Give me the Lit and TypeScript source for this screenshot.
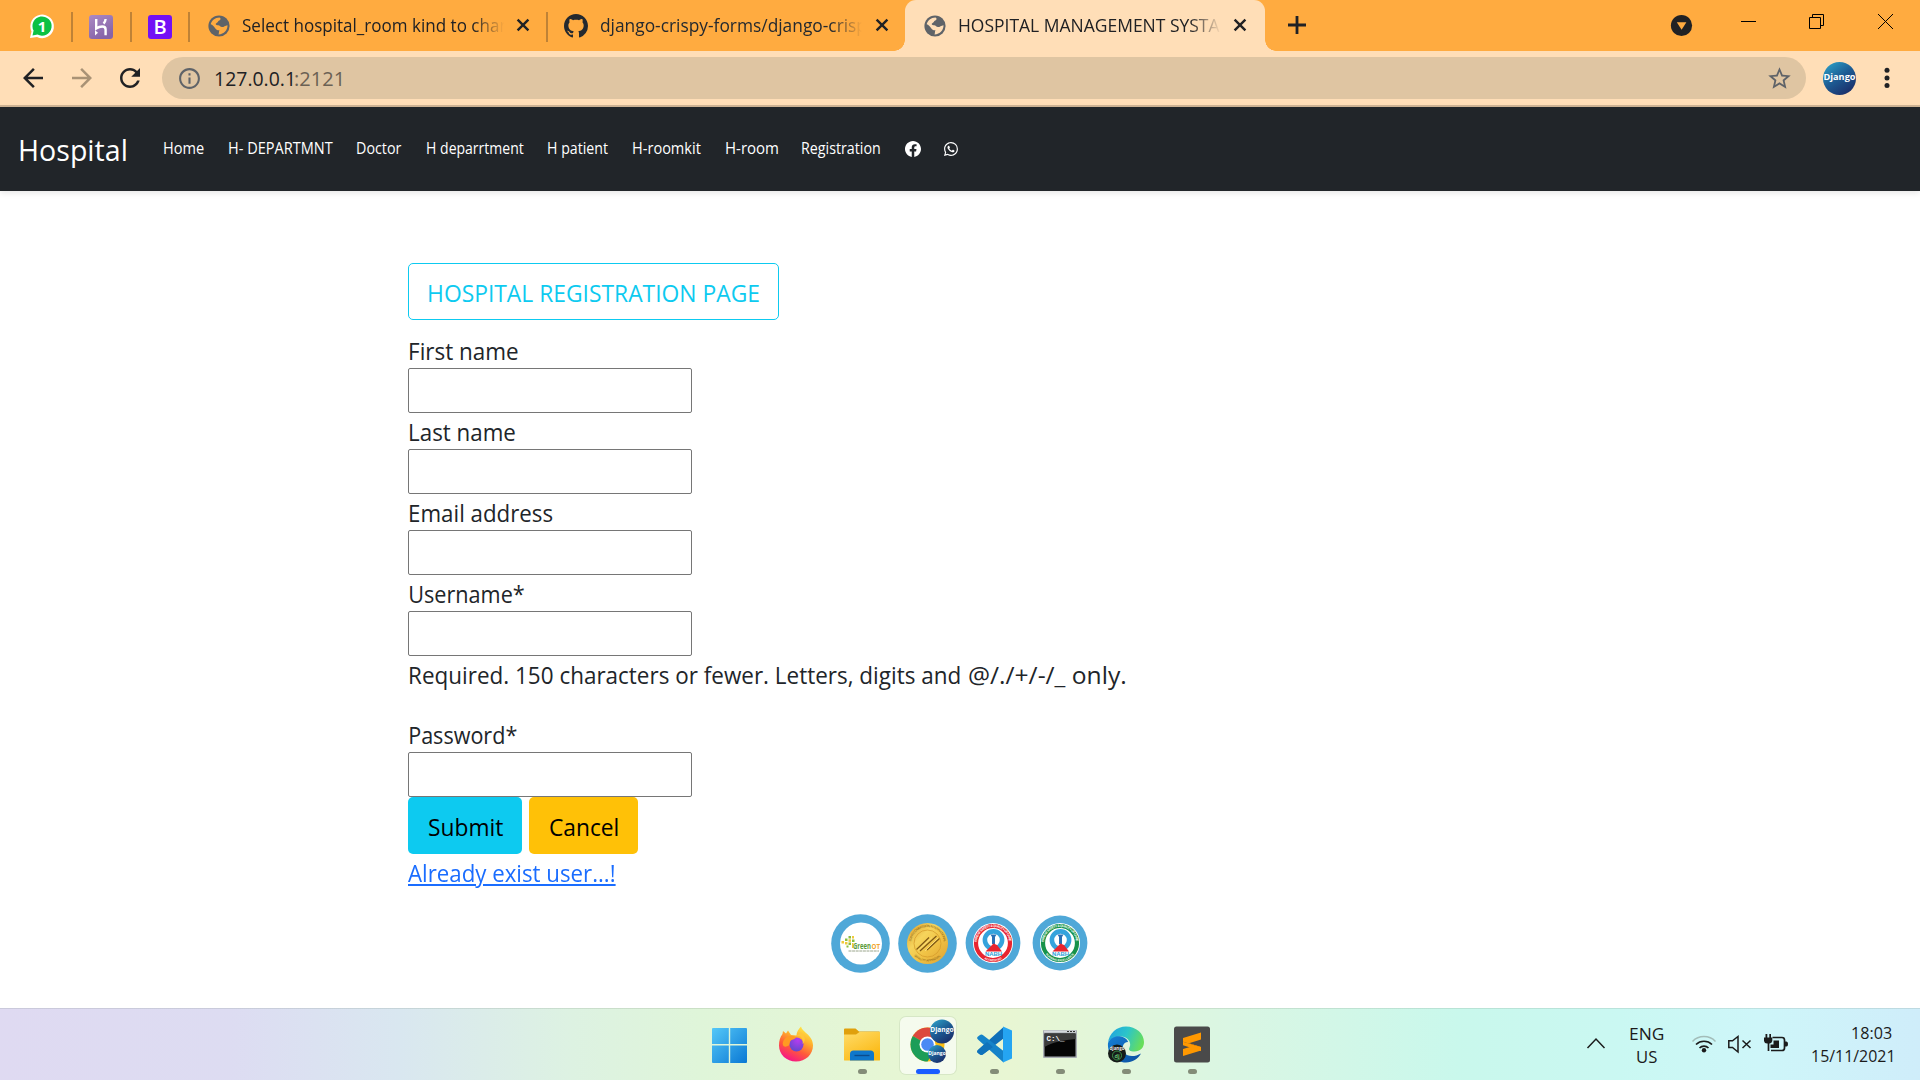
import { LitElement, html, css, svg } from "lit";
import { customElement, property } from "lit/decorators.js";

/** A line of text whose inked width is exactly `w` pixels. */
@customElement("fit-text")
class FitText extends LitElement {
  @property({ type: Number }) w = 0;
  @property() text = "";
  static styles = css`
    :host { display: block; flex: none; white-space: pre; }
    .ink { display: inline-block; transform-origin: 0 0; text-decoration: var(--deco, none);
      text-decoration-thickness: 2px; text-underline-offset: 2px; }
  `;
  render() { return html`<span class="ink">${this.text}</span>`; }
  updated() {
    const cs = getComputedStyle(this);
    const ctx = document.createElement("canvas").getContext("2d")!;
    ctx.font = `${cs.fontWeight} ${cs.fontSize} ${cs.fontFamily}`;
    const m = ctx.measureText(this.text);
    const s = this.w / (m.actualBoundingBoxLeft + m.actualBoundingBoxRight);
    const ink = this.renderRoot.querySelector(".ink") as HTMLElement;
    ink.style.transform = `translateX(${m.actualBoundingBoxLeft * s}px) scaleX(${s})`;
    this.style.width = `${this.w}px`;
  }
}

const I = {
  back: "M20 11H7.83l5.59-5.59L12 4l-8 8 8 8 1.41-1.41L7.83 13H20v-2z",
  fwd: "M12 4l-1.41 1.41L16.17 11H4v2h12.17l-5.58 5.59L12 20l8-8z",
  reload: "M17.65 6.35C16.2 4.9 14.21 4 12 4c-4.42 0-7.99 3.58-7.99 8s3.57 8 7.99 8c3.73 0 6.84-2.55 7.73-6h-2.08c-.82 2.33-3.04 4-5.65 4-3.31 0-6-2.69-6-6s2.69-6 6-6c1.66 0 3.14.69 4.22 1.78L13 11h7V4l-2.35 2.35z",
  star: "M22 9.24l-7.19-.62L12 2 9.19 8.63 2 9.24l5.46 4.73L5.82 21 12 17.27 18.18 21l-1.63-7.03L22 9.24zM12 15.4l-3.76 2.27 1-4.28-3.32-2.88 4.38-.38L12 6.1l1.71 4.04 4.38.38-3.32 2.88 1 4.28L12 15.4z",
  info: "M11 7h2v2h-2zm0 4h2v6h-2zm1-9C6.48 2 2 6.48 2 12s4.48 10 10 10 10-4.48 10-10S17.52 2 12 2zm0 18c-4.41 0-8-3.59-8-8s3.59-8 8-8 8 3.59 8 8-3.59 8-8 8z",
  github: "M8 0C3.58 0 0 3.58 0 8c0 3.54 2.29 6.53 5.47 7.59.4.07.55-.17.55-.38 0-.19-.01-.82-.01-1.49-2.01.37-2.53-.49-2.69-.94-.09-.23-.48-.94-.82-1.13-.28-.15-.68-.52-.01-.53.63-.01 1.08.58 1.23.82.72 1.21 1.87.87 2.33.66.07-.52.28-.87.51-1.07-1.78-.2-3.64-.89-3.64-3.95 0-.87.31-1.59.82-2.15-.08-.2-.36-1.02.08-2.12 0 0 .67-.21 2.2.82.64-.18 1.32-.27 2-.27.68 0 1.36.09 2 .27 1.53-1.04 2.2-.82 2.2-.82.44 1.1.16 1.92.08 2.12.51.56.82 1.27.82 2.15 0 3.07-1.87 3.75-3.65 3.95.29.25.54.73.54 1.48 0 1.07-.01 1.93-.01 2.2 0 .21.15.46.55.38A8.013 8.013 0 0016 8c0-4.42-3.58-8-8-8z",
  facebook: "M16 8.049c0-4.446-3.582-8.05-8-8.05C3.58 0-.002 3.603-.002 8.05c0 4.017 2.926 7.347 6.75 7.951v-5.625h-2.03V8.05H6.75V6.275c0-2.017 1.195-3.131 3.022-3.131.876 0 1.791.157 1.791.157v1.98h-1.009c-.993 0-1.303.621-1.303 1.258v1.51h2.218l-.354 2.326H9.25V16c3.824-.604 6.75-3.934 6.75-7.951z",
  whatsapp: "M13.601 2.326A7.854 7.854 0 0 0 7.994 0C3.627 0 .068 3.558.064 7.926c0 1.399.366 2.76 1.057 3.965L0 16l4.204-1.102a7.933 7.933 0 0 0 3.79.965h.004c4.368 0 7.926-3.558 7.93-7.93A7.898 7.898 0 0 0 13.6 2.326zM7.994 14.521a6.573 6.573 0 0 1-3.356-.92l-.24-.144-2.494.654.666-2.433-.156-.251a6.56 6.56 0 0 1-1.007-3.505c0-3.626 2.957-6.584 6.591-6.584a6.56 6.56 0 0 1 4.66 1.931 6.557 6.557 0 0 1 1.928 4.66c-.004 3.639-2.961 6.592-6.592 6.592zm3.615-4.934c-.197-.099-1.17-.578-1.353-.646-.182-.065-.315-.099-.445.099-.133.197-.513.646-.627.775-.114.133-.232.148-.43.05-.197-.1-.836-.308-1.592-.985-.59-.525-.985-1.175-1.103-1.372-.114-.198-.011-.304.088-.403.087-.088.197-.232.296-.346.1-.114.133-.198.198-.33.065-.134.034-.248-.015-.347-.05-.099-.445-1.076-.612-1.47-.16-.389-.323-.335-.445-.34-.114-.007-.247-.007-.38-.007a.729.729 0 0 0-.529.247c-.182.198-.691.677-.691 1.654 0 .977.71 1.916.81 2.049.098.133 1.394 2.132 3.383 2.992.47.205.84.326 1.129.418.475.152.904.129 1.246.08.38-.058 1.171-.48 1.338-.943.164-.464.164-.86.114-.943-.049-.084-.182-.133-.38-.232z",
};

const icon = (d: string, size: number, box = 24) =>
  html`<svg width=${size} height=${size} viewBox="0 0 ${box} ${box}" fill="currentColor"><path d=${d}></path></svg>`;

const globe = html`<svg class="globe" width="22" height="22" viewBox="0 0 22 22">
  <circle cx="11" cy="11" r="10.6" fill="#5f6368"/>
  <path class="land" d="M2.700 9.300C3.500 5.500 7 2.700 11.500 2.500C13.200 3.200 12.700 4.900 11.200 5.600C9.800 6.200 9.900 7.800 8.300 8.200C7 8.700 8 10.300 9.800 10.200C12 10 12.200 12.100 14 12.100C16 12.100 17 10.600 19.500 10.200C19.700 14.800 16 19.200 10.500 19.500C11.300 17.800 10.600 16.700 11.500 15.300C9.500 15.500 8 14.500 7 12.900C5.800 11.200 4.500 10 2.700 9.300Z"/>
</svg>`;

const tabX = html`<svg class="tabx" width="14" height="14" viewBox="0 0 14 14"><path d="M1.600 1.600L12.400 12.400M12.400 1.600L1.600 12.400" stroke="#202124" stroke-width="2.400"/></svg>`;

const django = (cx: number, cy: number, r: number, fs: number) => svg`
  <circle cx=${cx} cy=${cy} r=${r} fill="url(#dj)"/>
  <text x=${cx} y=${cy + fs * 0.12} text-anchor="middle" font-family="Open Sans, sans-serif" font-weight="700" font-size=${fs} textLength=${r * 1.94} lengthAdjust="spacingAndGlyphs" fill="#fff">Django</text>`;
const djGrad = svg`<linearGradient id="dj" x1="0.100" y1="0" x2="0.800" y2="1"><stop offset="0" stop-color="#2da3c9"/><stop offset=".5" stop-color="#1d5b93"/><stop offset="1" stop-color="#1b2a66"/></linearGradient>`;

const nabh = (c: string, top: string, bottom: string, id: string) => html`
  <svg width="56" height="56" viewBox="0 0 56 56">
    <defs><path id="${id}t" d="M11.800 28A16.200 16.200 0 0 1 44.200 28"/><path id="${id}b" d="M9.800 28A18.200 18.200 0 0 0 46.200 28"/></defs>
    <circle cx="28" cy="28" r="27.400" fill="#4fa8d8"/><circle cx="28" cy="28" r="20" fill="#fff"/>
    <circle cx="28" cy="28" r="17" fill="none" stroke=${c} stroke-width="4.200"/>
    <text font-size="3.300" fill="#fff" font-weight="700" font-family="Liberation Sans, sans-serif"><textPath href="#${id}t" textLength="48" startOffset="1">${top}</textPath></text>
    <text font-size="2.800" fill="#fff" font-weight="700" font-family="Liberation Sans, sans-serif"><textPath href="#${id}b" startOffset="50%" text-anchor="middle">${bottom}</textPath></text>
    <circle cx="28.500" cy="25" r="8.600" fill="none" stroke="#35a3dc" stroke-width="4.600"/>
    <path d="M25.500 19.500h6l-1.500 2.500v7h-3v-7z" fill="#2a6fb4"/>
    <path d="M20.500 36.500L28.500 28.500L32 30L37 36.500Z" fill="#e8242f"/>
    <text x="28.500" y="41.400" text-anchor="middle" font-size="6" textLength="17" fill="#2e9fd8" font-weight="700" font-family="Liberation Sans, sans-serif">NABH</text>
  </svg>`;

@customElement("app-root")
class AppRoot extends LitElement {
  static styles = css`
    :host { display: flex; flex-direction: column; width: 1920px; height: 1080px; overflow: hidden; background: #fff;
      font-family: "Open Sans", "Noto Sans", sans-serif; color: #212529; }
    * { box-sizing: border-box; }
    svg { display: block; flex: none; overflow: visible; }
    .strip { height: 51px; flex: none; background: #ffab40; display: flex; align-items: center; font-size: 17.3px; line-height: 51px; color: #202124; padding-left: 29px; }
    .sep { width: 2px; height: 30px; background: #bf8236; flex: none; margin-top: 2px; }
    .fav { margin: 2px 16.250px 0; }
    .tabx { margin-top: -1px; }
    .title { width: 262px; height: 51px; overflow: hidden; flex: none; -webkit-mask-image: linear-gradient(90deg, #000 88%, transparent 100%); mask-image: linear-gradient(90deg, #000 88%, transparent 100%); }
    .tab { display: flex; align-items: center; flex: none; }
    .first { margin-left: 18px; }
    .first .title { margin: 0 12px; }
    .second { margin-left: 15.500px; color: #24292f; }
    .second .title { margin: 0 12.500px; }
    .globe { margin-top: 1px; }
    .globe .land { fill: #ffab40; }
    .active .globe .land { fill: #ffdeb7; }
    .active { width: 360px; height: 51px; background: #ffdeb7; border-radius: 11px 11px 0 0; padding-left: 19px; margin-left: 16px; position: relative; }
    .active .title { margin: 0 12.500px 0 13px; }
    .active::before, .active::after { content: ""; position: absolute; bottom: 0; width: 11px; height: 11px; }
    .active::before { left: -11px; background: radial-gradient(circle at 0 0, transparent 10.500px, #ffdeb7 11px); }
    .active::after { right: -11px; background: radial-gradient(circle at 100% 0, transparent 10.500px, #ffdeb7 11px); }
    .plus { margin: -1px 0 0 23px; }
    .grow { flex: 1; }
    .win { display: flex; align-items: flex-start; height: 51px; padding-right: 27px; }
    .bar { height: 56px; flex: none; background: #ffdeb7; border-bottom: 2px solid #d0b595; display: flex; align-items: center; color: #202124; padding-left: 18px; }
    .fwd { color: #a99275; margin-left: 18.500px; }
    .reload { margin-left: 18px; }
    .omni { margin-left: 17.500px; width: 1644px; height: 42px; border-radius: 21px; background: #dfc5a2; display: flex; align-items: center; padding: 0 13px 0 15px; color: #5f6368; font-size: 20.500px; line-height: 42px; }
    .url { margin-left: 12.500px; display: flex; gap: 3px; }
    .host { color: #202124; }
    .port { color: #6b6154; }
    .avatar { margin-left: 17px; }
    .menu { margin-left: 28px; }
    .nav { height: 84px; flex: none; background: #212529; color: #fff; display: flex; padding-left: 19.500px; box-shadow: 0 2px 6px rgba(0,0,0,.1); }
    .brand { font-size: 29.300px; line-height: 86.500px; margin-right: 38.500px; }
    .links { display: flex; gap: 24.500px; font-size: 15.400px; line-height: 84px; align-items: center; }
    .links > :first-child { margin-right: 1px; }
    .links > svg:last-child { margin-left: -2px; }
    .main { flex: 1; padding: 72px 0 0 408px; font-size: 23.300px; display: flex; flex-direction: column; align-items: flex-start; }
    .head { height: 57px; width: 371px; border: 1px solid #0dcaf0; border-radius: 5px; color: #0dcaf0; line-height: 58px; padding-left: 19.500px; margin-bottom: 12px; }
    .label { height: 36px; line-height: 38px; padding-left: 1.700px; }
    .input { width: 284px; height: 45px; border: 1px solid #767676; border-radius: 2px; background: #fff; }
    .help { margin-bottom: 24px; display: flex; gap: 9.500px; }
    .btns { display: flex; gap: 7px; color: #000; line-height: 60.500px; }
    .btn { height: 57px; border-radius: 5px; padding-left: 20.500px; }
    .submit { width: 114px; background: #0dcaf0; }
    .cancel { width: 109px; background: #ffc107; }
    .link { color: #1a6dff; --deco: underline; padding-left: 0; }
    .badges { display: flex; align-items: center; margin: 23.500px 0 0 422.700px; gap: 8px; }
    .badges > svg:nth-child(4) { margin-left: 3.500px; }
    .task { height: 72px; flex: none; display: flex; border-top: 1px solid rgba(90,110,90,.15);
      background: linear-gradient(90deg, #dfdaf2 0, #dddcf2 230px, #d9e7f0 400px, #ddf2e2 570px, #dff5d9 700px, #e6f6d4 900px, #e8f6d3 1010px, #daf6e3 1230px, #c9f8ec 1460px, #caf8f2 1620px, #cef6f9 1760px, #cfedfa 1920px); color: #1b1b1b; font-size: 17px; }
    .apps { display: flex; margin-left: 696.500px; }
    .app { width: 66px; height: 71px; display: flex; flex-direction: column; align-items: center; padding-top: 8px; }
    .cell { width: 56px; height: 57px; border-radius: 6px; display: flex; flex-direction: column; align-items: center; padding-top: 7px; }
    .on { background: rgba(255,255,255,.6); box-shadow: 0 0 0 1px rgba(120,140,110,.14); }
    .dot { width: 9px; height: 5px; border-radius: 3px; background: #838c78; margin: 3px 0 0 1px; }
    .on .dot { width: 24px; background: #1a5cff; }
    .tray { margin-left: auto; display: flex; padding-right: 28.500px; }
    .two { display: flex; flex-direction: column; align-items: center; line-height: 23px; padding-top: 12.500px; }
    .right { align-items: flex-end; padding-top: 11.500px; }
  `;

  private field(text: string, w: number) {
    return html`<div class="label"><fit-text .text=${text} .w=${w}></fit-text></div><div class="input"></div>`;
  }
  private app(pic: unknown, running = true, on = false) {
    return html`<div class="app"><div class="cell ${on ? "on" : ""}">
      <svg width="46" height="42" viewBox="0 0 46 42">${pic}</svg>${running ? html`<div class="dot"></div>` : ""}</div></div>`;
  }

  render() {
    const links: [string, number][] = [["Home", 39.6], ["H- DEPARTMNT", 104.2], ["Doctor", 45], ["H deparrtment", 97.2], ["H patient", 60.4], ["H-roomkit", 68.3], ["H-room", 51.8], ["Registration", 78.3]];
    return html`
    <div class="strip">
      <svg width="26" height="26" viewBox="0 0 26 26"><path d="M1 25L2.500 18.500A11.800 11.800 0 1 1 8 24Z" fill="#fff"/><path d="M3.500 22.500L4.600 17.600A9.600 9.600 0 1 1 8.500 21.500Z" fill="#0cc143"/><text x="13" y="18.500" text-anchor="middle" font-size="15" font-weight="700" font-family="Open Sans, sans-serif" fill="#fff">1</text></svg>
      <div class="sep" style="margin-left:16px"></div>
      <svg class="fav" width="24" height="24" viewBox="0 0 24 24"><defs><linearGradient id="hk" x1="0" y1="0" x2=".5" y2="1"><stop offset="0" stop-color="#ab8ac4"/><stop offset="1" stop-color="#8663a8"/></linearGradient></defs><rect width="24" height="24" rx="3" fill="url(#hk)"/><path d="M7.200 4v9.500C9 12.300 11.500 11.500 13.300 11.500C15.800 11.500 16.600 12.800 16.600 14.500V20.200M16.600 4C16.500 5.800 15.800 7.200 14.600 8.600" fill="none" stroke="#fff" stroke-width="2.400"/><path d="M6 15.200L9 17.800L6 20.400Z" fill="#fff"/></svg>
      <div class="sep"></div>
      <svg class="fav" width="24" height="24" viewBox="0 0 24 24"><rect width="24" height="24" rx="3" fill="#7310f5"/><text x="12.200" y="19.200" text-anchor="middle" font-size="20" font-weight="600" font-family="Open Sans, sans-serif" fill="#fff">B</text></svg>
      <div class="sep"></div>
      <div class="tab first">${globe}<div class="title"><fit-text .text=${"Select hospital_room kind to change"} .w=${286}></fit-text></div>${tabX}</div>
      <div class="sep" style="margin-left:16px"></div>
      <div class="tab second">${icon(I.github, 24, 16)}<div class="title"><fit-text .text=${"django-crispy-forms/django-crispy"} .w=${276}></fit-text></div>${tabX}</div>
      <div class="tab active">${globe}<div class="title"><fit-text .text=${"HOSPITAL MANAGEMENT SYSTAM"} .w=${274.7}></fit-text></div>${tabX}</div>
      <svg class="plus" width="18" height="18" viewBox="0 0 18 18"><path d="M9 0V18M0 9H18" stroke="#202124" stroke-width="2.800"/></svg>
      <div class="grow"></div>
      <div class="win">
        <svg width="223" height="51" viewBox="1670 0 223 51" fill="none" stroke="#000">
          <circle cx="1681.500" cy="25.500" r="10.600" fill="#202124" stroke="none"/><path d="M1676.800 22.200H1686.400L1681.600 29.800Z" fill="#ffab40" stroke="none"/>
          <path d="M1741 21.500H1756"/><path d="M1809.500 17.500H1820.500V28.500H1809.500ZM1812.500 17.500V14.500H1823.500V25.500H1820.500"/><path d="M1878 14L1893 29M1893 14L1878 29"/>
        </svg>
      </div>
    </div>
    <div class="bar">
      ${icon(I.back, 30)}<div class="fwd">${icon(I.fwd, 30)}</div><div class="reload">${icon(I.reload, 30)}</div>
      <div class="omni">${icon(I.info, 25)}<div class="url"><fit-text class="host" .text=${"127.0.0.1"} .w=${77.5}></fit-text><fit-text class="port" .text=${":2121"} .w=${46.5}></fit-text></div><div class="grow"></div>${icon(I.star, 27)}</div>
      <svg class="avatar" width="33" height="33" viewBox="0 0 33 33"><defs>${djGrad}</defs>${django(16.5, 16.5, 16.5, 9)}</svg>
      <svg class="menu" width="6" height="22" viewBox="0 0 6 22" fill="#202124"><circle cx="3" cy="3.200" r="2.500"/><circle cx="3" cy="11" r="2.500"/><circle cx="3" cy="18.600" r="2.500"/></svg>
    </div>
    <div class="nav">
      <fit-text class="brand" .text=${"Hospital"} .w=${105.5}></fit-text>
      <div class="links">${links.map(([t, w]) => html`<fit-text .text=${t} .w=${w}></fit-text>`)}${icon(I.facebook, 16, 16)}${icon(I.whatsapp, 14, 16)}</div>
    </div>
    <div class="main">
      <div class="head"><fit-text .text=${"HOSPITAL REGISTRATION PAGE"} .w=${330}></fit-text></div>
      ${this.field("First name", 107.6)}${this.field("Last name", 104.8)}${this.field("Email address", 143)}${this.field("Username*", 114)}
      <div class="label help"><fit-text .text=${"Required. 150 characters or fewer. Letters, digits and"} .w=${550}></fit-text><fit-text .text=${"@/./+/-/_ only."} .w=${156.5}></fit-text></div>
      ${this.field("Password*", 106.5)}
      <div class="btns"><div class="btn submit"><fit-text .text=${"Submit"} .w=${74}></fit-text></div><div class="btn cancel"><fit-text .text=${"Cancel"} .w=${67.5}></fit-text></div></div>
      <div class="label link"><fit-text .text=${"Already exist user...!"} .w=${206.5}></fit-text></div>
      <div class="badges">
        <svg width="59" height="59" viewBox="0 0 59 59"><circle cx="29.500" cy="29.500" r="29.300" fill="#4fa8d8"/><circle cx="30" cy="29.500" r="21" fill="#fff"/>
          <g fill="#8abf3f"><rect x="14" y="24.500" width="2.500" height="2.500"/><rect x="17.500" y="22" width="2.500" height="2.500"/><rect x="21" y="25.500" width="2.500" height="2.500"/><rect x="17.500" y="28.500" width="2.500" height="2.500"/><rect x="15.500" y="31.500" width="2" height="2"/></g>
          <g fill="#f0c93a"><rect x="10.500" y="27" width="2.500" height="2.500"/><rect x="14" y="28" width="2.500" height="2.500"/><rect x="17.500" y="25.300" width="2.500" height="2.500"/><rect x="21" y="22" width="2" height="2.500"/><rect x="21" y="29" width="1.500" height="5"/></g>
          <text x="22" y="34.500" font-size="8.500" font-weight="700" font-family="Open Sans, sans-serif" fill="#5a9a3a" textLength="18" lengthAdjust="spacingAndGlyphs">Green</text><text x="40.500" y="34.500" font-size="7" font-weight="700" font-family="Open Sans, sans-serif" fill="#f3a52c" textLength="8.500" lengthAdjust="spacingAndGlyphs">OT</text><path d="M17.500 37H48" stroke="#9aa58c" stroke-width="1" stroke-dasharray="3 .600"/></svg>
        <svg width="59" height="59" viewBox="0 0 59 59"><defs><linearGradient id="gold" x1="0" y1="0" x2="1" y2="1"><stop offset="0" stop-color="#d99c2b"/><stop offset=".35" stop-color="#f6d45c"/><stop offset=".6" stop-color="#f0c244"/><stop offset="1" stop-color="#dda032"/></linearGradient><path id="jt" d="M13 29.500A16.500 16.500 0 0 1 46 29.500"/><path id="jb" d="M11.500 29.500A18 18 0 0 0 47.500 29.500"/></defs>
          <circle cx="29.500" cy="29.500" r="29.300" fill="#4fa8d8"/><circle cx="29.500" cy="29.500" r="20.500" fill="url(#gold)"/><circle cx="29.500" cy="29.500" r="13.500" fill="none" stroke="#d79d2c" stroke-width=".8"/>
          <text font-size="3.200" fill="#7d5a14" font-family="Liberation Sans, sans-serif"><textPath href="#jt" textLength="48" startOffset="2">JOINT COMMISSION INTERNATIONAL</textPath></text><text font-size="3" fill="#7d5a14" font-family="Liberation Sans, sans-serif"><textPath href="#jb" startOffset="50%" text-anchor="middle">QUALITY APPROVAL</textPath></text>
          <path d="M18.500 35.500L31 23.500M22 37L38.500 22M29 36L41.500 24.500" stroke="#7d5716" stroke-width="1.200"/><path d="M20 36.300L34 23.500M27 37L40 24" stroke="#f8de7c" stroke-width=".9"/></svg>
        ${nabh("#e8242f", "PATIENT SAFETY & QUALITY OF CARE", "ACCREDITED", "r")}
        ${nabh("#16924a", "PATIENT SAFETY & QUALITY OF CARE", "NURSING EXCELLENCE", "g")}
      </div>
    </div>
    <div class="task">
      <div class="apps">
        ${this.app(svg`<defs><linearGradient id="wn" x1="0" y1="0" x2="1" y2="1"><stop offset="0" stop-color="#55c8f8"/><stop offset="1" stop-color="#0a78d4"/></linearGradient></defs><path fill="url(#wn)" d="M6.500 3.500H22.300V19.500H5.500V4.500Q5.500 3.500 6.500 3.500ZM23.700 3.500H39.500Q40.500 3.500 40.500 4.500V19.500H23.700ZM5.500 21H22.300V38.500H6.500Q5.500 38.500 5.500 37.500ZM23.700 21H40.500V37.500Q40.500 38.500 39.500 38.500H23.700Z" transform="translate(-.500 .500)"/>`, false)}
        ${this.app(svg`<defs><linearGradient id="fx" x1=".8" y1="0" x2=".3" y2="1"><stop offset="0" stop-color="#fff04a"/><stop offset=".35" stop-color="#ffb02c"/><stop offset=".65" stop-color="#ff5a3a"/><stop offset="1" stop-color="#f5108c"/></linearGradient><radialGradient id="fp" cx=".6" cy=".2" r=".9"><stop offset="0" stop-color="#b43cf0"/><stop offset="1" stop-color="#5b49c9"/></radialGradient></defs>
          <path fill="url(#fx)" d="M28 2.500C28.500 5 30.500 6.500 33 9C37.500 12.500 40 16.500 40 21.500C40 30.500 32.500 37.500 23 37.500C13.500 37.500 6 30.500 6 21.500C6 17 7 13 9.500 10L10 7L13 9.500L15 6.500L18 11L23.500 11.500C23.500 8 25.500 5 28 2.500Z"/><circle cx="23.500" cy="20.500" r="7" fill="url(#fp)"/><path d="M10 18C12 12.500 18 10.500 23 13.500C22 15 20 15.500 17.500 16.500C16 19 17 22 14.500 22C11 24 9 21 10 18Z" fill="#ff9a22"/><path d="M23 12C27.500 10.500 31 15 29.500 20C33.500 17 32 10.500 28 8.500Z" fill="#ffc73a"/>`, false)}
        ${this.app(svg`<defs><linearGradient id="fo" x1="0" y1="0" x2=".6" y2="1"><stop offset="0" stop-color="#ffdc69"/><stop offset="1" stop-color="#fbb914"/></linearGradient></defs><path d="M5 5.500Q5 4.500 6 4.500H16.500L20 7.500H40Q41 7.500 41 8.500V14H5Z" fill="#e0a00c"/><path d="M5 10.500H17L20.500 8H41V36Q41 36.500 40 36.500H6Q5 36.500 5 36Z" fill="url(#fo)"/><path d="M11 36.500V30Q11 26.500 14.500 26.500H31.500Q35 26.500 35 30V36.500Z" fill="#0f77cb"/><path d="M15.500 31.500H30.500" stroke="#0b4b8c" stroke-width="1.400"/>`)}
        ${this.app(svg`<defs>${djGrad}</defs><circle cx="22.500" cy="20.500" r="17" fill="#fbbd12"/><path d="M22.500 20.500L7.780 12A17 17 0 0 1 37.220 12Z" fill="#dc483d"/><path d="M22.500 20.500L7.780 12A17 17 0 0 0 22.500 37.500L29 27Z" fill="#1c9d58"/><circle cx="22.500" cy="20.500" r="8" fill="#fff"/><circle cx="22.500" cy="20.500" r="6.300" fill="#4a8af4"/>${django(37, 7.5, 12, 6.5)}${django(32, 30, 9, 5.5)}`, true, true)}
        ${this.app(svg`<path d="M32.500 3L7.500 25.500Q5 27.500 7 29L9 30.500Q10.500 31.500 12.500 30L32.500 14.500Z" fill="#0f6fb8"/><path d="M32.500 38.500L7.500 16Q5 14 7 12.500L9 11Q10.500 10 12.500 11.500L32.500 27Z" fill="#1583c9"/><path d="M32 2.500L41 6.500V34.500L32 38.500Z" fill="#25a5f2"/><path d="M7.500 25.500L16 18L22 23L12.500 30Q10.500 31.500 9 30.500L7 29Q5 27.500 7.500 25.500Z" fill="#1073bb"/>`)}
        ${this.app(svg`<rect x="6" y="6" width="34" height="28" rx="1" fill="#a8adb3"/><rect x="7" y="6.500" width="32" height="2" fill="#d5d9dd"/><rect x="7.500" y="9.500" width="31" height="23" fill="#050505"/><path d="M7.500 9.500H38.500V15C27 16 16 18 7.500 23Z" fill="#3c3c3c"/><path d="M30 7.500h2m1 0h2m1 0h2" stroke="#333" stroke-width="1.200"/><text x="9.500" y="17" font-size="6.500" fill="#fff" font-weight="700" font-family="Liberation Mono, monospace" textLength="18" lengthAdjust="spacingAndGlyphs">C:\\_</text>`)}
        ${this.app(svg`<defs><linearGradient id="e1" x1="0" y1=".2" x2="1" y2=".5"><stop offset="0" stop-color="#1fa2e0"/><stop offset=".5" stop-color="#2cc5c9"/><stop offset="1" stop-color="#68de5a"/></linearGradient><linearGradient id="e2" x1="0" y1="0" x2="1" y2="1"><stop offset="0" stop-color="#1580d6"/><stop offset="1" stop-color="#0c4f9f"/></linearGradient></defs><path d="M5 19C6 9 14 2.500 23 2.500C33 2.500 41 9.500 41 18C41 24 37 27.500 31.500 27.500C27 27.500 25 26 26.500 23.500C29 19 25 12.500 17.500 12.500C11 12.500 6.500 15.500 5 19Z" fill="url(#e1)"/><path d="M5 19C7.500 13.500 13 11.500 18 12.500C22.500 13.500 25 16.500 25 18C20 18 18 24 21 29C25 33 32 33 38 29.500C35 35 29.500 38.500 23 38.500C12 38.500 4 29.500 5 19Z" fill="url(#e2)"/><circle cx="14" cy="29.500" r="9" fill="#151b18"/><text x="14" y="25.500" text-anchor="middle" font-size="5.500" font-weight="700" textLength="15" lengthAdjust="spacingAndGlyphs" font-family="Open Sans, sans-serif" fill="#e8e8e8">django</text><circle cx="14" cy="31.500" r="4.500" fill="none" stroke="#3f9a4c" stroke-width=".9"/><text x="14" y="33.500" text-anchor="middle" font-size="5.500" font-weight="700" font-family="Open Sans, sans-serif" fill="#62bd6b">dj</text>`)}
        ${this.app(svg`<rect x="5" y="2.500" width="36" height="36" rx="2.500" fill="#4a4a4a"/><path d="M14 14L32 8.500V15.500L20 19.200L32 23V26.500L14 32V25L26 21.500L14 17.800Z" fill="#ff9800"/><path d="M14 17.800L32 23V27L14 21.200Z" fill="#ff9800"/><path d="M20 19.200L32 23L26 21.500Z" fill="#c76f00"/>`)}
      </div>
      <div class="tray">
        <svg width="43" height="71" viewBox="1587 1009 43 71" fill="none" stroke="#1b1b1b" stroke-width="1.500"><path d="M1587.500 1048L1596 1039L1604.500 1048"/></svg>
        <div class="two"><fit-text .text=${"ENG"} .w=${34}></fit-text><fit-text .text=${"US"} .w=${20}></fit-text></div>
        <svg width="148" height="71" viewBox="1664 1009 148 71" fill="none" stroke="#1b1b1b" stroke-width="1.700">
          <path d="M1692.500 1041.500A16 16 0 0 1 1715.500 1041.500" stroke="#a3bdb9" stroke-width="1.500"/><path d="M1696 1044.500A11.500 11.500 0 0 1 1712 1044.500M1699.500 1048A6.500 6.500 0 0 1 1708.500 1048"/><circle cx="1704" cy="1050.200" r="2.200" fill="#1b1b1b" stroke="none"/>
          <path d="M1728.800 1040.800H1732.500L1738 1036.500V1052L1732.500 1047.500H1728.800ZM1742.500 1040.500L1750.500 1048M1750.500 1040.500L1742.500 1048" stroke-width="1.500"/>
          <path d="M1772.500 1037.500H1782Q1784.500 1037.500 1784.500 1040V1048Q1784.500 1050.500 1782 1050.500H1771M1768.500 1042V1051"/><path d="M1785 1041.500H1786.500Q1788 1041.500 1788 1044Q1788 1046.500 1786.500 1046.500H1785Z" fill="#1b1b1b" stroke="none"/><path d="M1773.500 1040.500H1779V1048H1770.500V1044.500H1773.500Z" fill="#1b1b1b" stroke="none"/><path d="M1764 1037.500H1765.500V1034H1767.300V1037.500H1769.300V1034H1771V1037.500H1772.300V1041Q1771.500 1043.500 1769.500 1043.500H1767Q1764.500 1043.500 1764 1041Z" fill="#1b1b1b" stroke="none"/>
        </svg>
        <div class="two right"><fit-text .text=${"18:03"} .w=${39.5}></fit-text><fit-text .text=${"15/11/2021"} .w=${80}></fit-text></div>
      </div>
    </div>`;
  }
}
